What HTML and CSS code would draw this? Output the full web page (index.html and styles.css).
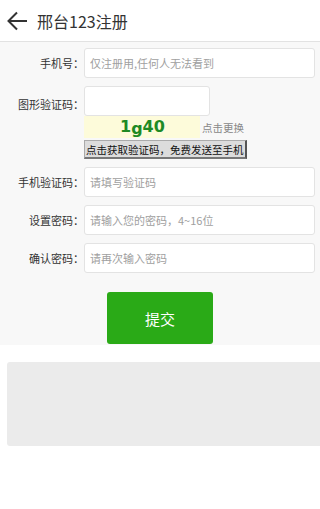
FILE: index.html
```html
<!DOCTYPE html>
<html lang="zh-CN">
<head>
    <meta charset="UTF-8">
    <meta name="viewport" content="width=device-width, initial-scale=1.0">
    <title>邢台123注册</title>
    <link rel="stylesheet" href="styles.css">
</head>
<body>
    <div class="header">
        <button class="back-button" onclick="history.back()">
            <svg width="22" height="20" viewBox="0 0 22 20">
                <path d="M20 10 H2 M10 1.5 L1.5 10 L10 18.5" fill="none" stroke="#333" stroke-width="2"/>
            </svg>
        </button>
        <div class="title">邢台123注册</div>
    </div>

    <form class="reg-form" onsubmit="return false">
        <div class="row">
            <label class="label">手机号：</label>
            <input type="text" placeholder="仅注册用,任何人无法看到">
        </div>

        <div class="row row-captcha">
            <label class="label">图形验证码：</label>
            <div class="captcha-box">
                <input type="text" class="short-input">
                <div class="captcha-line">
                    <div class="captcha-img"><span>1</span><span class="low">g</span><span>4</span><span>0</span></div>
                    <span class="refresh">点击更换</span>
                </div>
                <button type="button" class="sms-button">点击获取验证码，免费发送至手机</button>
            </div>
        </div>

        <div class="row">
            <label class="label">手机验证码：</label>
            <input type="text" placeholder="请填写验证码">
        </div>

        <div class="row">
            <label class="label">设置密码：</label>
            <input type="password" placeholder="请输入您的密码，4~16位">
        </div>

        <div class="row">
            <label class="label">确认密码：</label>
            <input type="password" placeholder="请再次输入密码">
        </div>

        <div class="submit-wrap">
            <button type="submit" class="submit-button">提交</button>
        </div>
    </form>

    <div class="ad-box"></div>
</body>
</html>
```

FILE: styles.css
```css
:root {
    --green: #2aaa17;
    --text: #333;
    --placeholder: #a0a0a0;
    --border: #e3e3e3;
    --form-bg: #f8f8f8;
}

* {
    margin: 0;
    padding: 0;
    box-sizing: border-box;
}

body {
    font-family: "Noto Sans CJK SC", "Noto Sans", sans-serif;
    background: #fff;
    color: var(--text);
}

.header {
    height: 42px;
    display: flex;
    align-items: center;
    border-bottom: 1px solid #e2e2e2;
}

.back-button {
    background: none;
    border: none;
    width: 37px;
    height: 41px;
    padding-left: 7px;
    display: flex;
    align-items: center;
}

.title {
    font-size: 16px;
    color: #333;
}

.reg-form {
    background: var(--form-bg);
    padding: 6px 5px 1px 0;
}

.row {
    display: flex;
    align-items: center;
    margin-bottom: 8px;
}

.row-captcha {
    align-items: flex-start;
}

.row-captcha .label {
    padding-top: 3px;
}

.label {
    width: 84px;
    flex-shrink: 0;
    text-align: right;
    font-size: 11px;
    color: var(--text);
    line-height: 30px;
}

input {
    flex: 1;
    height: 30px;
    border: 1px solid var(--border);
    border-radius: 3px;
    background: #fff;
    padding: 0 5px;
    font-family: inherit;
    font-size: 11px;
    color: var(--text);
    outline: none;
}

input::placeholder {
    color: var(--placeholder);
}

.captcha-box {
    display: flex;
    flex-direction: column;
    align-items: flex-start;
}

.short-input {
    width: 126px;
    flex: none;
}

.captcha-line {
    display: flex;
    align-items: center;
    height: 22px;
}

.captcha-img {
    width: 116px;
    height: 22px;
    background: #fdfbda;
    padding-left: 36px;
    font-family: "DejaVu Sans", sans-serif;
    font-weight: bold;
    font-size: 16px;
    color: #1e8a24;
    line-height: 22px;
}

.captcha-img .low {
    position: relative;
    top: 2px;
}

.refresh {
    margin-left: 2px;
    font-size: 10.5px;
    color: #888;
}

.sms-button {
    margin-top: 2px;
    height: 19px;
    padding: 0 1px;
    background: #dcdcdc;
    border: 1px solid #aaa;
    border-right: 2px solid #555;
    border-bottom: 2px solid #777;
    font-family: inherit;
    font-size: 10.5px;
    color: #111;
    line-height: 15px;
}

.submit-wrap {
    display: flex;
    justify-content: center;
    padding: 11px 0 0 5px;
}

.submit-button {
    width: 106px;
    height: 52px;
    border: none;
    border-radius: 3px;
    background: var(--green);
    color: #fff;
    font-family: inherit;
    font-size: 15px;
}

.ad-box {
    margin: 17px 0 0 7px;
    height: 84px;
    background: #ebebeb;
    border-radius: 3px 0 0 3px;
}
```
